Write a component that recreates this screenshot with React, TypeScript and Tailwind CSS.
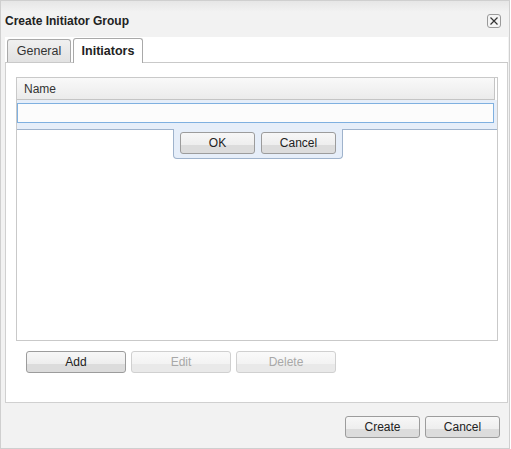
import React from "react"

const btn =
  "h-[22px] rounded-[3px] border text-[12px] flex items-center justify-center bg-[linear-gradient(#f7f7f7_0%,#eeeeee_58%,#dcdcdc_59%,#dcdcdc_100%)]"

function Button({ label, width, disabled }: { label: string; width: number; disabled?: boolean }) {
  return (
    <button
      className={
        btn +
        (disabled
          ? " border-[#d0d0d0] text-[#a8a8a8] bg-[linear-gradient(#fafafa_0%,#f3f3f3_58%,#e9e9e9_59%,#e9e9e9_100%)]"
          : " border-[#9c9c9c] text-[#222]")
      }
      style={{ width }}
    >
      {label}
    </button>
  )
}

export default function App() {
  return (
    <div className="w-[511px] h-[449px] bg-white font-['Liberation_Sans',Arial,sans-serif] text-[12px] text-[#222]">
      <div className="w-[510px] h-[449px] bg-[#f2f2f2] border border-[#cfcfcf] flex flex-col">
        {/* title bar */}
        <div className="h-[36px] flex items-center justify-between pl-[4px] pr-[8px] bg-[linear-gradient(#e6e6e6_0%,#f2f2f2_30%,#f2f2f2_100%)]">
          <span className="font-bold text-[12px] text-[#222] pt-[4px]">Create Initiator Group</span>
          <button className="w-[14px] h-[14px] mt-[4px] rounded-[3px] border border-[#9a9a9a] bg-[#f4f4f4] flex items-center justify-center">
            <svg width="10" height="10" viewBox="0 0 10 10">
              <path d="M1.5 1.5 L8.5 8.5 M8.5 1.5 L1.5 8.5" stroke="#333" strokeWidth="1.2" />
            </svg>
          </button>
        </div>

        {/* tab panel */}
        <div className="ml-[4px] w-[503px] flex flex-col">
          <div className="h-[26px] bg-white flex items-end pl-[2px] gap-[2px] border-b border-[#c9c9c9]">
            <div className="h-[23px] w-[64px] rounded-t-[3px] border border-b-0 border-[#a9a9a9] bg-[linear-gradient(#f0f0f0,#e2e2e2)] flex items-center justify-center text-[#333] text-[12.5px]">
              General
            </div>
            <div className="h-[25px] w-[70px] -mb-px rounded-t-[3px] border border-b-0 border-[#a9a9a9] bg-white flex items-center justify-center font-bold text-[12.5px] text-[#222]">
              Initiators
            </div>
          </div>

          <div className="h-[340px] bg-white border border-t-0 border-[#d0d0d0] pt-[14px] pl-[10px] flex flex-col">
            {/* grid */}
            <div className="relative w-[482px] h-[264px] border border-[#c9c9c9]">
              <div className="h-[22px] w-[478px] flex items-center pl-[7px] border-b border-r border-[#c4c4c4] bg-[linear-gradient(#f9f9f9,#ebebeb)] text-[#333]">
                Name
              </div>
              <div className="h-[30px] bg-[#e6eef9] border-b border-[#9fb3cc] pt-[3px] pl-0">
                <div className="w-[477px] h-[20px] bg-[#fcfcfc] border border-[#7fb0e0]" />
              </div>
              {/* row editor buttons */}
              <div className="absolute left-[156px] top-[51px] w-[170px] h-[30px] bg-[#e6eef9] border border-t-0 border-[#9fb3cc] rounded-b-[4px] flex gap-[6px] pl-[6px] pt-[3px]">
                <Button label="OK" width={75} />
                <Button label="Cancel" width={75} />
              </div>
            </div>

            <div className="flex gap-[5px] mt-[10px] ml-[10px]">
              <Button label="Add" width={100} />
              <Button label="Edit" width={100} disabled />
              <Button label="Delete" width={100} disabled />
            </div>
          </div>
        </div>

        <div className="flex justify-end gap-[5px] pr-[9px] mt-[13px]">
          <Button label="Create" width={75} />
          <Button label="Cancel" width={75} />
        </div>
      </div>
    </div>
  )
}
